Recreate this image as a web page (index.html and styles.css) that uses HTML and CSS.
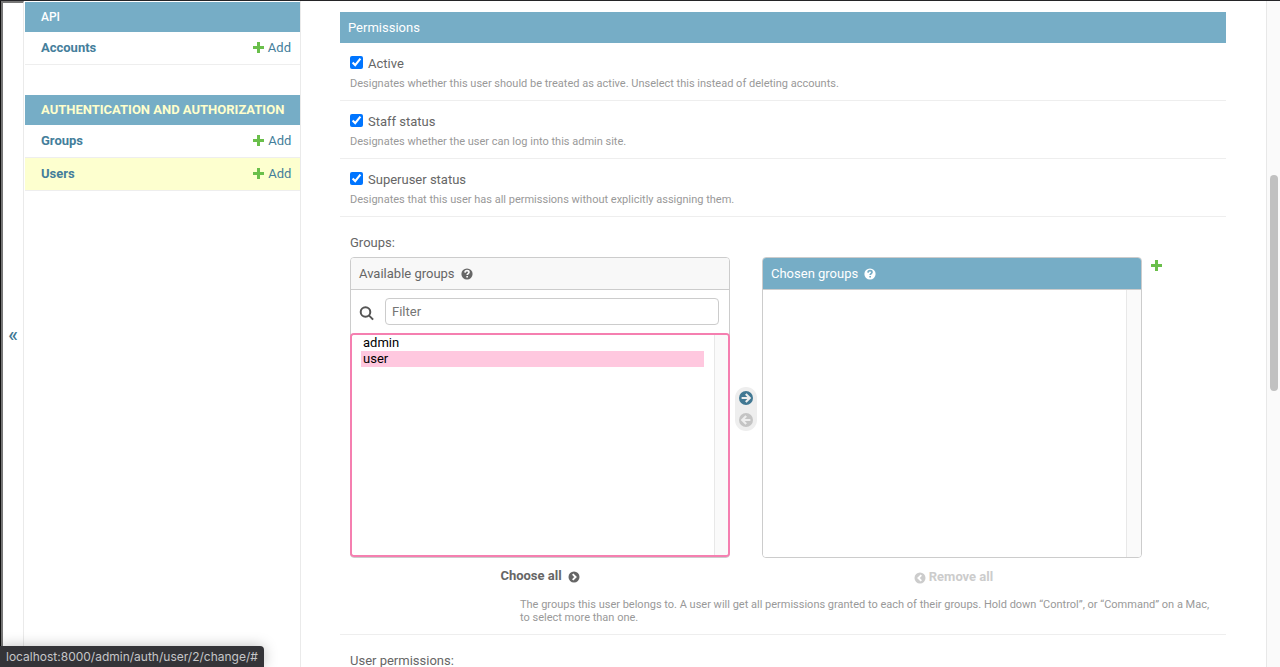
FILE: index.html
```html
<!DOCTYPE html>
<html lang="en">
<head>
<meta charset="utf-8">
<title>Change user</title>
<link rel="stylesheet" href="styles.css">
</head>
<body>
<svg class="defs" aria-hidden="true">
  <symbol id="plus" viewBox="0 0 12 12"><path d="M5 1h3v4h4v3H8v4H5V8H1V5h4z"/></symbol>
  <symbol id="help" viewBox="0 0 12 12"><circle cx="6" cy="6" r="5.6"/><path d="M4 4.6C4.1 3.2 5 2.7 6 2.7c1.200 0 2 .7 2 1.600C8 5.600 6.200 5.700 6.200 7" fill="none" stroke="var(--mark)" stroke-width="1.700"/><path d="M5.300 8h1.700v1.600H5.300z" fill="var(--mark)"/></symbol>
  <symbol id="arrow" viewBox="0 0 14 14"><circle cx="7" cy="7" r="7"/><path d="M2.600 7h7.800M6.800 3L10.800 7l-4 4" fill="none" stroke="#eee" stroke-width="2.100"/></symbol>
  <symbol id="chevron" viewBox="0 0 12 12"><circle cx="6" cy="6" r="5.500"/><path d="M4.700 3.100L7.600 6 4.700 8.900" fill="none" stroke="#fff" stroke-width="1.900"/></symbol>
</svg>
<div class="page">
  <button class="toggle" type="button" aria-label="Toggle navigation">«</button>
  <nav class="sidebar">
    <table>
      <caption><a href="#">API</a></caption>
      <tr><th><a href="#">Accounts</a></th><td><a href="#"><svg><use href="#plus"/></svg>Add</a></td></tr>
    </table>
    <table>
      <caption class="current"><a href="#">Authentication and Authorization</a></caption>
      <tr><th><a href="#">Groups</a></th><td><a href="#"><svg><use href="#plus"/></svg>Add</a></td></tr>
      <tr class="selected"><th><a href="#">Users</a></th><td><a href="#"><svg><use href="#plus"/></svg>Add</a></td></tr>
    </table>
  </nav>
  <main class="content">
    <h2>Permissions</h2>
    <div class="row">
      <div class="check"><input type="checkbox" id="active" checked><label for="active">Active</label></div>
      <p class="hint">Designates whether this user should be treated as active. Unselect this instead of deleting accounts.</p>
    </div>
    <div class="row">
      <div class="check"><input type="checkbox" id="staff" checked><label for="staff">Staff status</label></div>
      <p class="hint">Designates whether the user can log into this admin site.</p>
    </div>
    <div class="row">
      <div class="check"><input type="checkbox" id="superuser" checked><label for="superuser">Superuser status</label></div>
      <p class="hint">Designates that this user has all permissions without explicitly assigning them.</p>
    </div>
    <div class="row groups">
      <label class="title" for="available">Groups:</label>
      <div class="selector">
        <div class="side">
          <div class="box">
            <h3>Available groups <svg><use href="#help"/></svg></h3>
            <div class="filter">
              <label for="filter" aria-label="Filter"><svg viewBox="0 0 15 15"><circle cx="6.500" cy="6" r="4.800"/><path d="M9.900 9.400l4.200 4.200"/></svg></label>
              <input id="filter" type="text" placeholder="Filter">
            </div>
            <div class="list focused">
              <select id="available" multiple><option>admin</option><option selected>user</option></select>
              <span class="track"></span>
            </div>
          </div>
          <a class="all" href="#">Choose all <svg><use href="#chevron"/></svg></a>
        </div>
        <div class="chooser">
          <button type="button" aria-label="Choose"><svg><use href="#arrow"/></svg></button>
          <button type="button" class="back" aria-label="Remove" disabled><svg><use href="#arrow"/></svg></button>
        </div>
        <div class="side">
          <div class="box chosen">
            <h3>Chosen groups <svg><use href="#help"/></svg></h3>
            <div class="list">
              <select aria-label="Chosen groups" multiple></select>
              <span class="track"></span>
            </div>
          </div>
          <a class="all remove" href="#"><svg><use href="#chevron"/></svg> Remove all</a>
        </div>
        <a class="new" href="#" aria-label="Add another group"><svg><use href="#plus"/></svg></a>
      </div>
      <p class="hint indented">The groups this user belongs to. A user will get all permissions granted to each of their groups. Hold down “Control”, or “Command” on a Mac, to select more than one.</p>
    </div>
    <div class="row last"><span class="title">User permissions:</span></div>
  </main>
  <div class="scrollbar"><span class="thumb"></span></div>
</div>
<div class="status">localhost:8000/admin/auth/user/2/change/#</div>
</body>
</html>
```
FILE: styles.css
```css
* { box-sizing: border-box; }
body {
  margin: 0;
  height: 100vh;
  overflow: hidden;
  font: 13px/16px Roboto, sans-serif;
  color: #666;
  background: #fff;
  border-top: 1px solid #242427;
}
a { color: #447e9b; text-decoration: none; }
svg { flex: none; }
.defs { position: absolute; width: 0; height: 0; }
.page { display: flex; height: 100%; border-left: 1px solid #111; }
.toggle {
  width: 23px;
  flex: none;
  padding: 0 0 2px;
  border: 0;
  border-top: 2px solid #777;
  border-left: 2px solid #777;
  border-right: 1px solid #eaeaea;
  background: #fff;
  color: #417893;
  font: 500 20px/20px Roboto, sans-serif;
}
.sidebar {
  width: 277px;
  flex: none;
  padding: 1px 0 0 1px;
  border-right: 1px solid #eaeaea;
}
.sidebar table { width: 100%; margin-bottom: 30px; border-collapse: separate; border-spacing: 0; }
.sidebar caption {
  height: 30px;
  padding: 7px 16px;
  text-align: left;
  font-size: 12px;
  font-weight: 500;
  text-transform: uppercase;
  white-space: nowrap;
  background: #76adc6;
}
.sidebar caption a { color: #fff; }
.sidebar caption.current { font-size: 13px; font-weight: 700; }
.sidebar caption.current a { color: #ffc; }
.sidebar th, .sidebar td { height: 33px; padding: 0 9px 0 16px; border-bottom: 1px solid #eee; text-align: left; }
.sidebar td a { display: flex; justify-content: flex-end; align-items: center; gap: 4px; }
.sidebar td svg, .new svg { width: 12px; height: 12px; fill: #6abf4b; }
.sidebar td svg { margin-bottom: 2px; }
.selected { background: #fdffcf; }
.content { flex: 1; min-width: 0; padding: 11px 40px 0 39px; overflow: hidden; }
h2 { margin: 0; padding: 8px; height: 31px; font: 13px/16px Roboto, sans-serif; color: #fff; background: #76adc6; }
.row { padding: 12px 10px 10px; border-bottom: 1px solid #eee; }
.check { display: flex; align-items: flex-start; gap: 5px; height: 16px; }
.check input { width: 13px; height: 13px; margin: 1px 0 0; accent-color: #0075ff; }
.check label { padding-top: 1px; }
.hint { margin: 6px 0 0; font-size: 11px; line-height: 13px; color: #999; }
.groups { padding-top: 18px; }
.title { display: block; }
.selector { display: flex; margin-top: 6px; }
.side { width: 380px; flex: none; display: flex; flex-direction: column; align-items: center; }
.box { width: 100%; height: 301px; display: flex; flex-direction: column; border: 1px solid #ccc; border-radius: 4px; }
.box h3 {
  display: flex;
  align-items: center;
  gap: 6px;
  margin: 0;
  padding: 8px;
  height: 32px;
  font: 13px/16px Roboto, sans-serif;
  background: #f8f8f8;
  border-bottom: 1px solid #ccc;
  border-radius: 3px 3px 0 0;
}
.box h3 svg { width: 12px; height: 12px; fill: #666; --mark: #f8f8f8; }
.chosen h3 { color: #fff; background: #76adc6; }
.chosen h3 svg { fill: #fff; --mark: #76adc6; }
.filter { display: flex; align-items: center; gap: 11px; padding: 8px 10px 8px 8px; }
.filter label { display: flex; padding-top: 4px; }
.filter svg { width: 15px; height: 15px; fill: none; stroke: #555; stroke-width: 2; }
.filter input {
  flex: 1;
  height: 27px;
  padding: 5px 6px;
  border: 1px solid #ccc;
  border-radius: 4px;
  font: 13px/16px Roboto, sans-serif;
}
.filter input::placeholder { color: #757575; }
.list { flex: 1; min-height: 0; display: flex; overflow: hidden; border-radius: 0 0 3px 3px; }
.list.focused { margin: 0 -1px; border: 2px solid #f57fb0; border-radius: 4px; }
.list select {
  flex: 1;
  min-width: 0;
  padding: 0 10px 0 9px;
  border: 0;
  outline: 0;
  overflow: hidden;
  background: #fff;
  color: #000;
  font: 13px/16px Roboto, sans-serif;
}
.list option { padding: 0 2px; min-height: 16px; color: #000; }
.list option:checked { color: #000; background: #ffc8df linear-gradient(#ffc8df, #ffc8df); }
.track { width: 15px; flex: none; background: #fafafa; border-left: 1px solid #e8e8e8; }
.focused .track { width: 14px; }
.all { display: flex; align-items: center; gap: 6px; margin-top: 10px; font-weight: 700; color: #666; }
.all svg { width: 12px; height: 12px; margin-top: 2px; fill: #666; }
.remove { gap: 3px; margin: 11px 0 0 3px; color: #ccc; }
.remove svg { fill: #ccc; transform: rotate(180deg); }
.chooser {
  display: flex;
  flex-direction: column;
  gap: 8px;
  width: 22px;
  height: 44px;
  margin: 130px 5px 0;
  padding: 4px;
  border-radius: 11px;
  background: #eee;
}
.chooser button { display: flex; padding: 0; border: 0; background: none; }
.chooser svg { width: 14px; height: 14px; fill: #417893; }
.chooser .back svg { fill: #c4c4c4; transform: rotate(180deg); }
.new { margin: 2px 0 0 8px; }
.indented { margin: 13px 0 0 170px; }
.last { padding-top: 18px; border: 0; }
.scrollbar { position: relative; width: 14px; flex: none; background: #fafafa; border-left: 1px solid #e8e8e8; }
.thumb { position: absolute; top: 174px; right: 2px; width: 8px; height: 216px; border-radius: 4px; background: #c1c1c1; }
.status {
  position: absolute;
  left: 0;
  bottom: 0;
  height: 21px;
  padding: 3px 6px 2px;
  font: 12px/16px Inter, sans-serif;
  color: #c6c6c8;
  background: #343438;
  border-radius: 0 4px 0 0;
  box-shadow: 0 0 14px rgba(0, 0, 0, 0.25);
}
```
